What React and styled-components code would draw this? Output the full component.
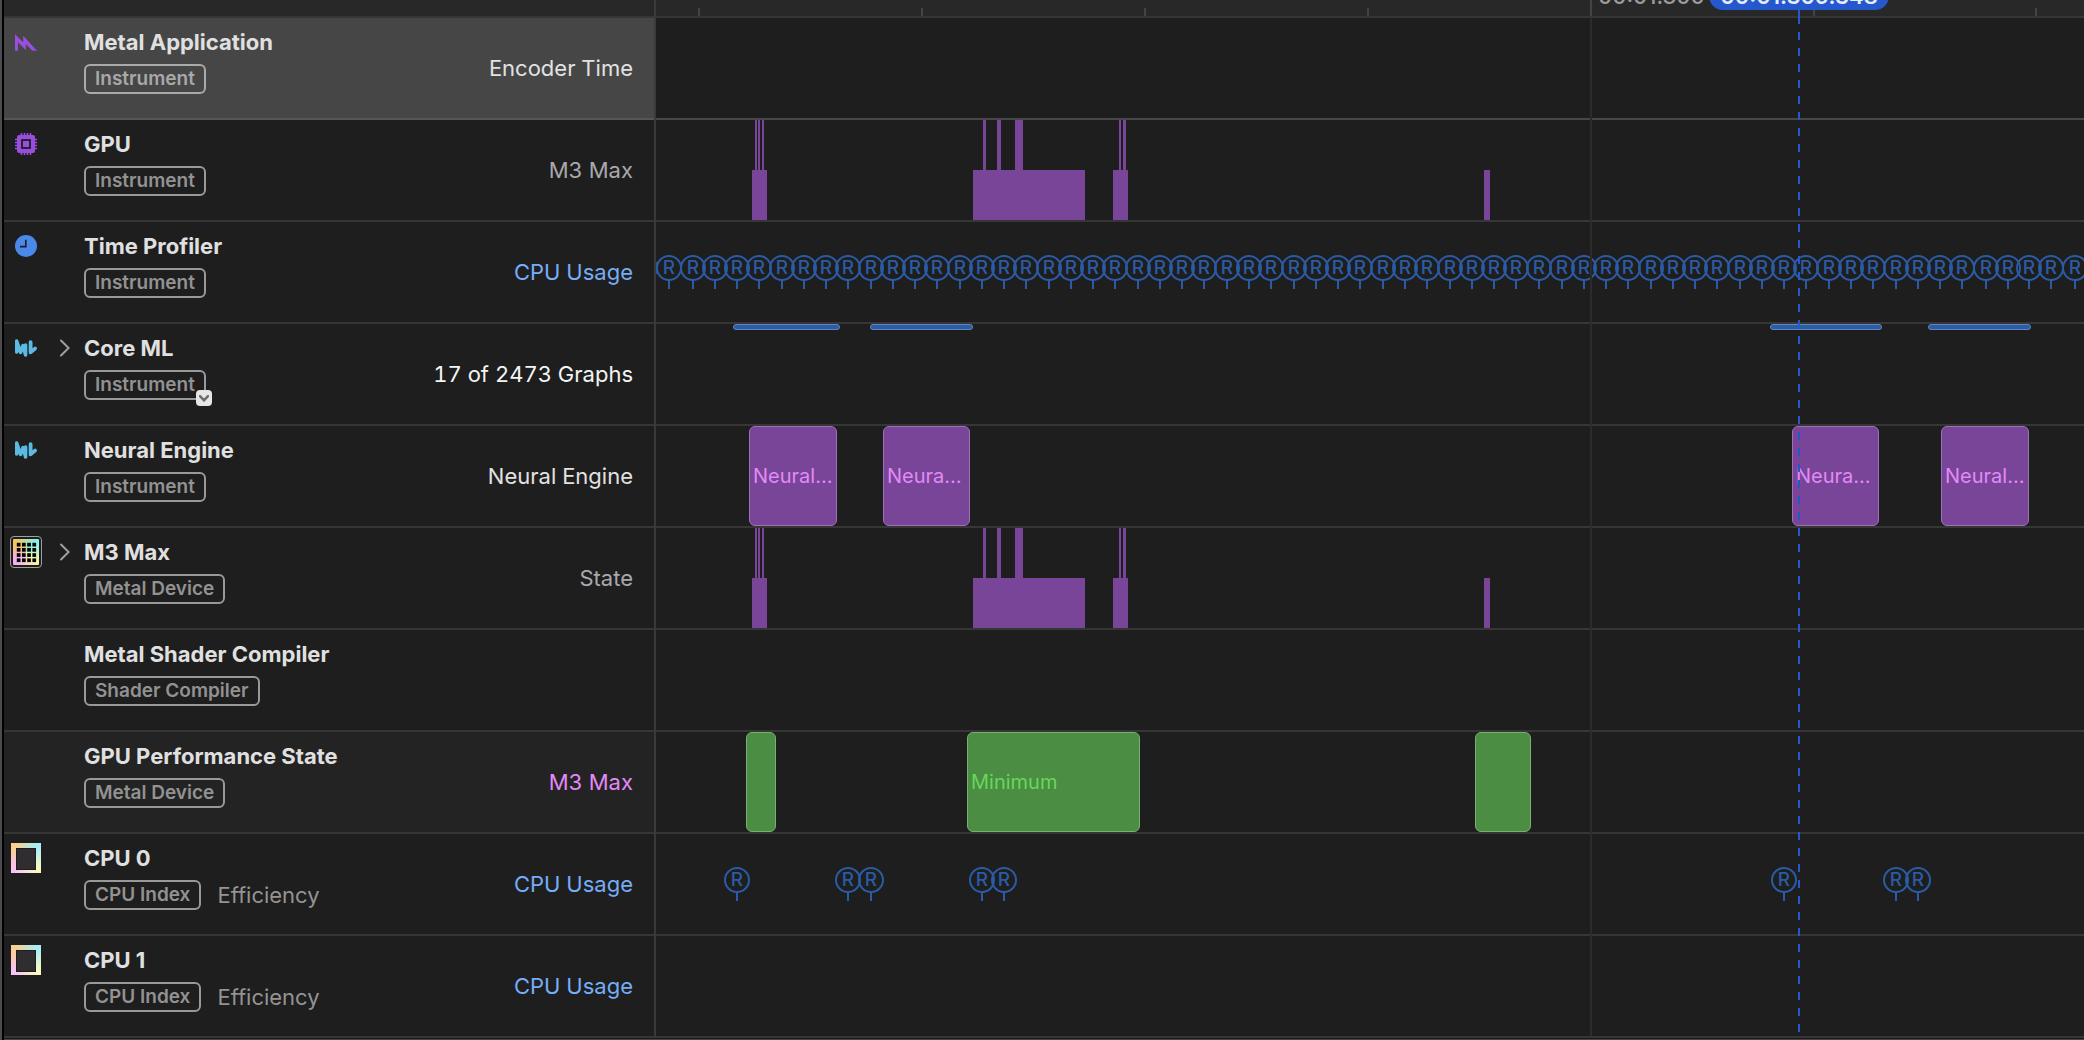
import styled, { createGlobalStyle, css } from 'styled-components';

const GlobalStyle = createGlobalStyle`
  * {
    box-sizing: border-box;
  }

  body {
    margin: 0;
    background: #1e1e1e;
    color: #e0e0e0;
    font-family: Inter, 'Liberation Sans', sans-serif;
    font-size: 22px;
    line-height: 28px;
    overflow: hidden;
  }

  button {
    padding: 0;
    border: 0;
    background: none;
    color: inherit;
    cursor: pointer;
  }
`;

// Length of the visible time range, in timeline units.
const SPAN = 1430;
const at = (value) => `${(value / SPAN) * 100}%`;

const RULER_TICKS = [44, 267, 490, 713, 1159, 1381];
const MAJOR_TICK = 936;
const PLAYHEAD = 1144;

const SAMPLES = [
  -9, 15, 39, 61, 83, 105, 128, 150, 172, 194, 217, 239, 261, 283, 306, 328, 350, 372, 395, 417, 439, 461, 484, 506,
  528, 550, 573, 595, 617, 640, 662, 684, 706, 729, 751, 773, 796, 818, 840, 862, 885, 908, 930, 952, 974, 997, 1019,
  1041, 1063, 1086, 1108, 1130, 1152, 1175, 1197, 1219, 1242, 1264, 1286, 1308, 1332, 1354, 1375, 1397, 1421,
];

const GPU_BARS = [
  { start: 98, width: 15 },
  { start: 101, width: 2, full: true },
  { start: 104, width: 2, full: true },
  { start: 108, width: 2, full: true },
  { start: 319, width: 112 },
  { start: 329, width: 3, full: true },
  { start: 343, width: 4, full: true },
  { start: 361, width: 8, full: true },
  { start: 459, width: 15 },
  { start: 465, width: 2, full: true },
  { start: 469, width: 3, full: true },
  { start: 830, width: 6 },
];

const TRACKS = [
  { name: 'Metal Application', tag: 'Instrument', icon: 'metal', label: 'Encoder Time', tone: 'bright', selected: true },
  { name: 'GPU', tag: 'Instrument', icon: 'chip', label: 'M3 Max', tone: 'dim', bars: GPU_BARS },
  { name: 'Time Profiler', tag: 'Instrument', icon: 'clock', label: 'CPU Usage', tone: 'blue', samples: SAMPLES },
  {
    name: 'Core ML',
    tag: 'Instrument',
    icon: 'ml',
    label: '17 of 2473 Graphs',
    tone: 'white',
    expandable: true,
    menu: true,
    strips: [
      { start: 79, width: 107 },
      { start: 216, width: 103 },
      { start: 1116, width: 112 },
      { start: 1274, width: 103 },
    ],
  },
  {
    name: 'Neural Engine',
    tag: 'Instrument',
    icon: 'ml',
    label: 'Neural Engine',
    tone: 'bright',
    blocks: [
      { start: 95, width: 88, text: 'Neural…' },
      { start: 229, width: 87, text: 'Neura…' },
      { start: 1138, width: 87, text: 'Neura…' },
      { start: 1287, width: 88, text: 'Neural…' },
    ],
  },
  {
    name: 'M3 Max',
    tag: 'Metal Device',
    icon: 'device',
    label: 'State',
    tone: 'dim',
    expandable: true,
    bars: GPU_BARS,
  },
  { name: 'Metal Shader Compiler', tag: 'Shader Compiler' },
  {
    name: 'GPU Performance State',
    tag: 'Metal Device',
    label: 'M3 Max',
    tone: 'pink',
    raised: true,
    blocks: [
      { start: 92, width: 30, green: true },
      { start: 313, width: 173, green: true, text: 'Minimum' },
      { start: 821, width: 56, green: true },
    ],
  },
  {
    name: 'CPU 0',
    tag: 'CPU Index',
    note: 'Efficiency',
    icon: 'core',
    label: 'CPU Usage',
    tone: 'blue',
    samples: [83, 194, 217, 328, 350, 1130, 1242, 1264],
  },
  { name: 'CPU 1', tag: 'CPU Index', note: 'Efficiency', icon: 'core', label: 'CPU Usage', tone: 'blue' },
];

const TONES = {
  bright: '#e2e2e2',
  white: '#f4f4f4',
  dim: '#a9a9ad',
  blue: '#76adf7',
  pink: '#e389f6',
};

const Window = styled.div`
  min-height: 100vh;
  display: flex;
  border-left: 2px solid #4b4b4f;
  overflow: hidden;
`;

const Main = styled.main`
  position: relative;
  flex: 1;
  min-width: 0;
  border-left: 2px solid #000;
`;

const columns = css`
  display: grid;
  grid-template-columns: 650px minmax(0, 1fr);
`;

const Ruler = styled.header`
  ${columns}
  height: 18px;
  background: #282828;
  border-bottom: 2px solid #363636;
`;

const Scale = styled.div`
  position: relative;
  grid-column: 2;
`;

const Tick = styled.i`
  position: absolute;
  bottom: 0;
  width: 2px;
  height: ${(props) => (props.$major ? '16px' : '8px')};
  background: #434343;
`;

const TimeLabel = styled.span`
  position: absolute;
  bottom: 6px;
  padding-left: 8px;
  color: #9b9b9b;
  font-weight: 500;
`;

const TimePill = styled.output`
  position: absolute;
  bottom: 6px;
  width: 180px;
  margin-left: -89px;
  border-radius: 14px;
  background: #2458cc;
  color: #e6ecfb;
  font-weight: 600;
  text-align: center;
  z-index: 3;
`;

const TrackList = styled.ul`
  margin: 0;
  padding: 0;
  list-style: none;
`;

const Track = styled.li`
  ${columns}
  height: 102px;
`;

const TrackHeader = styled.div`
  display: flex;
  min-width: 0;
  padding-right: 21px;
  background: ${(props) => (props.$selected ? '#464646' : props.$raised ? '#232323' : '#1e1e1e')};
  border-bottom: 2px solid ${(props) => (props.$selected ? '#565656' : '#363636')};
`;

const IconCell = styled.div`
  width: 44px;
  height: 48px;
  display: flex;
  align-items: center;
  justify-content: center;
`;

const DisclosureCell = styled.div`
  width: 34px;
  height: 48px;
  margin-right: 2px;
  display: flex;
  align-items: center;
  justify-content: center;

  button {
    display: flex;
    padding: 4px;
  }
`;

const Info = styled.div`
  flex: 1;
  padding-top: 10px;
`;

const Name = styled.h2`
  margin: 0;
  font-size: 22px;
  line-height: 28px;
  font-weight: 700;
  white-space: nowrap;
`;

const Meta = styled.div`
  display: flex;
  align-items: center;
  gap: 16px;
  margin-top: 8px;
  color: #949494;
`;

const Tag = styled.span`
  position: relative;
  height: 30px;
  padding: 0 9px;
  border: 2px solid ${(props) => (props.$selected ? '#aaaaaa' : '#999999')};
  border-radius: 6px;
  color: ${(props) => (props.$selected ? '#a8a8a8' : '#929292')};
  font-size: 19px;
  line-height: 26px;
  font-weight: 600;
  white-space: nowrap;
`;

const TagMenu = styled.button`
  position: absolute;
  right: -8px;
  bottom: -8px;
  width: 16px;
  height: 16px;
  display: flex;
  align-items: center;
  justify-content: center;

  && {
    border-radius: 4px;
    background: #e6e6e6;
  }
`;

const Label = styled.span`
  align-self: center;
  color: ${(props) => TONES[props.$tone]};
  font-variant-numeric: tabular-nums;
  white-space: nowrap;
`;

const Lane = styled.div`
  position: relative;
  overflow: hidden;
  border-bottom: 2px solid ${(props) => (props.$selected ? '#484848' : '#363636')};
`;

const Bar = styled.i`
  position: absolute;
  bottom: 0;
  height: ${(props) => (props.$full ? '100%' : '50%')};
  background: #784599;
`;

const Strip = styled.i`
  position: absolute;
  top: 0;
  height: 6px;
  border: 1px solid #6186bd;
  border-radius: 3px;
  background: #2a5da6;
`;

const Block = styled.div`
  position: absolute;
  top: 0;
  bottom: 0;
  display: flex;
  align-items: center;
  padding-left: 3px;
  border: 1px solid ${(props) => (props.$green ? '#79b073' : '#9c72b6')};
  border-radius: 6px;
  background: ${(props) => (props.$green ? '#4a8d43' : '#784599')};
  color: ${(props) => (props.$green ? '#66d75a' : '#e389f6')};
  font-size: 20px;
  white-space: nowrap;
`;

const Sample = styled.span`
  position: absolute;
  top: 33px;
  width: 26px;
  height: 26px;
  margin-left: -13px;
  border: 2px solid #2a5ba4;
  border-radius: 50%;
  color: #2a5ba4;
  font-size: 19px;
  font-weight: 500;
  line-height: 22px;
  text-align: center;

  &::after {
    content: '';
    position: absolute;
    top: 100%;
    left: 10px;
    width: 2px;
    height: 10px;
    background: #2a5ba4;
  }
`;

const Overlay = styled.div`
  position: absolute;
  top: 0;
  bottom: 4px;
  left: 650px;
  right: 0;
  pointer-events: none;

  &::before {
    content: '';
    position: absolute;
    top: 0;
    bottom: 0;
    left: 0;
    width: 2px;
    background: #3a3a3a;
  }
`;

const GridLine = styled.i`
  position: absolute;
  top: 18px;
  bottom: 0;
  width: 2px;
  background: #2b2b2b;
`;

const Playhead = styled.i`
  position: absolute;
  top: 0;
  bottom: 0;
  width: 2px;
  background:
    linear-gradient(#2458cc, #2458cc) 0 0 / 2px 24px no-repeat,
    repeating-linear-gradient(#2458cc 0 8px, transparent 8px 16px);
`;

const Footer = styled.footer`
  height: 2px;
  border-top: 1px solid #1c1a1c;
  background: #454346;
`;

const DeviceFrame = styled.span`
  width: 32px;
  height: 32px;
  padding: 2px;
  border: 1px solid #a0a0a0;
  border-radius: 4px;
  background: conic-gradient(from 45deg, #7ef5f2, #f9f99c 25%, #f4acfa 50%, #f8c458 75%, #7ef5f2) content-box #1a1a1a;

  svg {
    display: block;
  }
`;

const CoreFrame = styled.span`
  width: 30px;
  height: 30px;
  padding: 5px;
  background: conic-gradient(from 45deg, #a6eefa, #fbfbbd 25%, #f8c2fa 50%, #fbd08d 75%, #a6eefa);

  &::before {
    content: '';
    display: block;
    height: 20px;
    border: 1px solid #1f1c1f;
    background: #302d31;
  }
`;

function MetalIcon() {
  return (
    <svg width="22" height="17" viewBox="0 0 67 51" fill="#994ede">
      <path d="M0 0 L25 25 V5 L67 51 H53 L33 30 V49 L9 25 V51 H0 Z" />
    </svg>
  );
}

function ChipIcon() {
  return (
    <svg width="22" height="22" viewBox="0 0 22 22">
      <rect x="2" y="2" width="18" height="18" rx="2" fill="#994ede" />
      <path
        d="M6.5 0V22M9.5 0V22M12.5 0V22M15.5 0V22M0 6.5H22M0 9.5H22M0 12.5H22M0 15.5H22"
        stroke="#994ede"
        strokeWidth="1.6"
      />
      <rect x="7" y="7" width="8" height="8" fill="#994ede" stroke="#1e1e1e" strokeWidth="1.8" />
    </svg>
  );
}

function ClockIcon() {
  return (
    <svg width="22" height="22" viewBox="0 0 23 23">
      <circle cx="11.5" cy="11.5" r="11.5" fill="#4b88ec" />
      <path d="M11.3 5V12.2H5.2" fill="none" stroke="#1e1e1e" strokeWidth="1.7" />
    </svg>
  );
}

function MlIcon() {
  return (
    <svg width="22" height="18" viewBox="0 0 22 18" fill="none" stroke="#5bb9e2" strokeLinecap="round">
      <path d="M1.7 13V2L5.6 13.4L8 6.6L10.6 16V6" strokeWidth="3.5" strokeLinejoin="round" />
      <path d="M15.6 3.2V13.4L20 9.6" strokeWidth="3.8" strokeLinejoin="round" />
    </svg>
  );
}

function DeviceIcon() {
  const cells = [3.8, 9, 14.2, 19.4];
  return (
    <DeviceFrame>
      <svg width="26" height="26" viewBox="0 0 26 26">
        {cells.map((y) => cells.map((x) => <rect key={`${x}-${y}`} x={x} y={y} width="3.7" height="3.7" fill="#000" />))}
      </svg>
    </DeviceFrame>
  );
}

const ICONS = {
  metal: MetalIcon,
  chip: ChipIcon,
  clock: ClockIcon,
  ml: MlIcon,
  device: DeviceIcon,
  core: CoreFrame,
};

function TrackRow({ track }) {
  const Icon = ICONS[track.icon];
  const { bars = [], strips = [], blocks = [], samples = [] } = track;

  return (
    <Track>
      <TrackHeader $selected={track.selected} $raised={track.raised}>
        <IconCell>{Icon && <Icon />}</IconCell>
        <DisclosureCell>
          {track.expandable && (
            <button type="button" aria-label={`Expand ${track.name}`}>
              <svg width="10" height="18" viewBox="0 0 10 18" fill="none" stroke="#a0a0a0" strokeWidth="2">
                <path d="M1 1.5L8.6 9L1 16.5" strokeLinecap="round" />
              </svg>
            </button>
          )}
        </DisclosureCell>
        <Info>
          <Name>{track.name}</Name>
          <Meta>
            <Tag $selected={track.selected}>
              {track.tag}
              {track.menu && (
                <TagMenu type="button" aria-label={`${track.name} options`}>
                  <svg width="10" height="7" viewBox="0 0 10 7" fill="none" stroke="#6c6c6c" strokeWidth="2.4">
                    <path d="M1 1.2L5 5.4L9 1.2" strokeLinecap="round" />
                  </svg>
                </TagMenu>
              )}
            </Tag>
            {track.note && <span>{track.note}</span>}
          </Meta>
        </Info>
        {track.label && <Label $tone={track.tone}>{track.label}</Label>}
      </TrackHeader>
      <Lane $selected={track.selected}>
        {bars.map((bar) => (
          <Bar key={bar.start} $full={bar.full} style={{ left: at(bar.start), width: at(bar.width) }} />
        ))}
        {strips.map((strip) => (
          <Strip key={strip.start} style={{ left: at(strip.start), width: at(strip.width) }} />
        ))}
        {blocks.map((block) => (
          <Block key={block.start} $green={block.green} style={{ left: at(block.start), width: at(block.width) }}>
            {block.text}
          </Block>
        ))}
        {samples.map((sample) => (
          <Sample key={sample} style={{ left: at(sample) }}>
            R
          </Sample>
        ))}
      </Lane>
    </Track>
  );
}

export default function App() {
  return (
    <>
      <GlobalStyle />
      <Window>
        <Main>
          <Ruler>
            <Scale>
              {RULER_TICKS.map((tick) => (
                <Tick key={tick} style={{ left: at(tick) }} />
              ))}
              <Tick $major style={{ left: at(MAJOR_TICK) }} />
              <TimeLabel style={{ left: at(MAJOR_TICK) }}>00:01.300</TimeLabel>
              <TimePill style={{ left: at(PLAYHEAD) }}>00:01.309.348</TimePill>
            </Scale>
          </Ruler>
          <TrackList>
            {TRACKS.map((track) => (
              <TrackRow key={track.name + track.tag} track={track} />
            ))}
          </TrackList>
          <Footer />
          <Overlay>
            <GridLine style={{ left: at(MAJOR_TICK) }} />
            <Playhead style={{ left: at(PLAYHEAD) }} />
          </Overlay>
        </Main>
      </Window>
    </>
  );
}
